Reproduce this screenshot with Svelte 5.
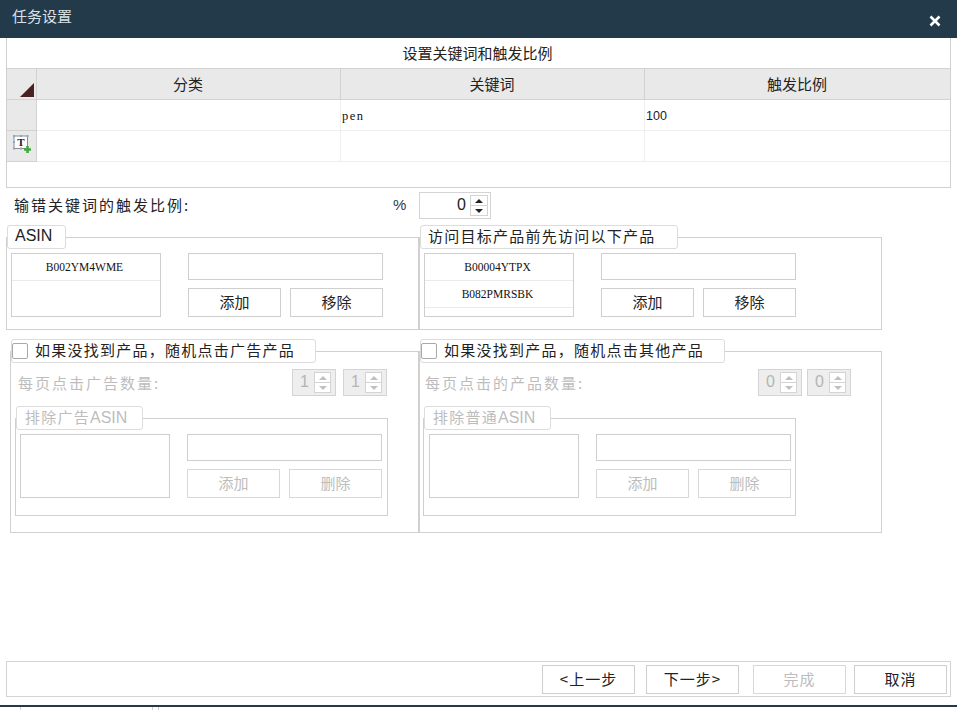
<script>
  let keywordRows = [
    { category: '', keyword: 'pen', ratio: '100' },
    { category: '', keyword: '', ratio: '' }
  ];
</script>

{#snippet spinner(value, disabled)}
  <div class="spinner" class:off={disabled}>
    <span class="spin-value">{value}</span>
    <span class="spin-arrows">
      <i class="up"></i>
      <i class="down"></i>
    </span>
  </div>
{/snippet}

{#snippet asinPanel(items, secondLabel, disabled)}
  <div class="panel" class:off={disabled}>
    <div class="list">
      {#each items as item}
        <div class="list-item">{item}</div>
      {/each}
    </div>
    <div class="editor">
      <div class="field"></div>
      <div class="editor-buttons">
        <button class="btn" {disabled}>添加</button>
        <button class="btn" {disabled}>{secondLabel}</button>
      </div>
    </div>
  </div>
{/snippet}

<div class="dialog">
  <header class="titlebar">
    <span class="title">任务设置</span>
    <svg class="close" width="12" height="12" viewBox="0 0 12 12">
      <path d="M1.5 1.5 10.5 10.5M10.5 1.5 1.5 10.5" stroke="#fff" stroke-width="2.6" />
    </svg>
  </header>

  <section class="table-box">
    <div class="table-title">设置关键词和触发比例</div>
    <div class="grid">
      <div class="corner">
        <svg width="14" height="14" viewBox="0 0 14 14"><polygon points="14,0 14,14 0,14" fill="#4a2020" /></svg>
      </div>
      <div class="head">分类</div>
      <div class="head">关键词</div>
      <div class="head">触发比例</div>

      {#each keywordRows as row, i}
        <div class="gutter">
          {#if i === 1}
            <svg width="20" height="20" viewBox="0 0 20 20">
              <rect x="2" y="2" width="13.5" height="12.5" fill="#fff" stroke="#8c8c8c" />
              <path d="M1 1h2v2H1zM8 1h2v2H8zM14.500 1h2v2h-2zM1 7h2v2H1zM1 13.500h2v2H1zM8 13.500h2v2H8z" fill="#8aa6d0" />
              <text x="8.800" y="12" text-anchor="middle" class="t-glyph">T</text>
              <path d="M15.500 12v7M12 15.500h7" stroke="#3fa83f" stroke-width="2.600" />
            </svg>
          {/if}
        </div>
        <div class="cell">{row.category}</div>
        <div class="cell mono">{row.keyword}</div>
        <div class="cell">{row.ratio}</div>
      {/each}
    </div>
  </section>

  <div class="typo-row">
    <span class="label typo-label">输错关键词的触发比例:</span>
    <span class="percent">%</span>
    <div class="spinner wide">
      <span class="spin-value">0</span>
      <span class="spin-arrows dark">
        <i class="up"></i>
        <i class="down"></i>
      </span>
    </div>
  </div>

  <div class="frames-top">
    <fieldset class="frame first">
      <div class="legend"><span class="latin">ASIN</span></div>
      {@render asinPanel(['B002YM4WME'], '移除', false)}
    </fieldset>
    <fieldset class="frame second">
      <div class="legend second-legend"><span class="label">访问目标产品前先访问以下产品</span></div>
      {@render asinPanel(['B00004YTPX', 'B082PMRSBK'], '移除', false)}
    </fieldset>
  </div>

  <div class="frames-bottom">
    <fieldset class="frame lower-left">
      <div class="legend check-legend">
        <input type="checkbox" />
        <span class="label">如果没找到产品，随机点击广告产品</span>
      </div>
      <div class="count-row">
        <span class="label muted count-label">每页点击广告数量:</span>
        <div class="spinners">
          {@render spinner(1, true)}
          {@render spinner(1, true)}
        </div>
      </div>
      <div class="inner">
        <div class="legend inner-legend"><span class="muted inner-title">排除广告<span class="latin">ASIN</span></span></div>
        {@render asinPanel([], '删除', true)}
      </div>
    </fieldset>

    <fieldset class="frame lower-right">
      <div class="legend check-legend">
        <input type="checkbox" />
        <span class="label">如果没找到产品，随机点击其他产品</span>
      </div>
      <div class="count-row">
        <span class="label muted count-label">每页点击的产品数量:</span>
        <div class="spinners">
          {@render spinner(0, true)}
          {@render spinner(0, true)}
        </div>
      </div>
      <div class="inner">
        <div class="legend inner-legend"><span class="muted inner-title">排除普通<span class="latin">ASIN</span></span></div>
        {@render asinPanel([], '删除', true)}
      </div>
    </fieldset>
  </div>

  <footer class="footer">
    <button class="btn">&lt;上一步</button>
    <button class="btn">下一步&gt;</button>
    <button class="btn" disabled>完成</button>
    <button class="btn">取消</button>
  </footer>

  <div class="strip">
    <i class="tick a"></i>
    <i class="tick b"></i>
    <i class="tick c"></i>
  </div>
</div>

<style>
  :global(body) {
    margin: 0;
    background: #fff;
  }

  .dialog {
    width: 957px;
    height: 710px;
    display: flex;
    flex-direction: column;
    overflow: hidden;
    font-family: "Noto Sans CJK SC", "Liberation Sans", sans-serif;
    font-size: 14px;
    color: #222;
    background: #fff;
  }

  .titlebar {
    height: 38px;
    flex: none;
    box-sizing: border-box;
    display: flex;
    justify-content: space-between;
    padding: 6px 16px 0 12px;
    background: #233a4b;
    color: #d9e0e5;
  }

  .title {
    font-size: 15px;
    line-height: 20px;
  }

  .close {
    margin-top: 9px;
  }

  .table-box {
    margin-left: 6px;
    width: 945px;
    height: 150px;
    flex: none;
    box-sizing: border-box;
    border: 1px solid #d0d0d0;
    border-top: none;
  }

  .table-title {
    height: 30px;
    line-height: 29px;
    text-align: center;
    font-size: 15px;
    padding-right: 2px;
  }

  .grid {
    display: grid;
    grid-template-columns: 30px 304px 304px 1fr;
    grid-template-rows: 32px;
    grid-auto-rows: 31px;
  }

  .corner,
  .head,
  .gutter {
    background: #e9e9e9;
    box-sizing: border-box;
    border-right: 1px solid #d2d2d2;
    border-bottom: 1px solid #d2d2d2;
    border-top: 1px solid #d2d2d2;
  }

  .head:nth-child(4) {
    border-right: none;
  }

  .head {
    text-align: center;
    line-height: 30px;
    font-size: 15px;
    padding-right: 1px;
  }

  .corner {
    display: flex;
    align-items: flex-end;
    justify-content: flex-end;
    padding: 0 2px 2px 0;
  }

  .gutter {
    border-top: none;
    display: flex;
    align-items: flex-start;
    justify-content: center;
    padding-top: 3px;
  }

  .t-glyph {
    font-family: "Liberation Serif", serif;
    font-weight: 700;
    font-size: 11px;
    fill: #222;
  }

  .cell {
    box-sizing: border-box;
    border-right: 1px solid #eeeeee;
    border-bottom: 1px solid #eeeeee;
    padding-left: 1px;
    line-height: 32px;
    font-family: "Liberation Sans", sans-serif;
    font-size: 12.5px;
  }

  .cell:nth-child(4n) {
    border-right: none;
  }

  .mono {
    font-family: "Liberation Serif", serif;
    font-size: 12.5px;
    letter-spacing: 1.5px;
    color: #111;
  }

  .label {
    font-size: 15px;
    letter-spacing: 1.25px;
    line-height: 20px;
    white-space: nowrap;
  }

  .latin {
    font-family: "Liberation Sans", sans-serif;
    font-size: 16px;
    letter-spacing: 0;
  }

  .typo-row {
    height: 49px;
    flex: none;
    box-sizing: border-box;
    display: flex;
    align-items: flex-start;
    padding: 4px 0 0 14px;
  }

  .typo-label {
    width: 379px;
    line-height: 26px;
    letter-spacing: 2px;
  }

  .percent {
    width: 26px;
    font-family: "Liberation Sans", sans-serif;
    font-size: 15px;
    line-height: 26px;
    color: #2b3a55;
  }

  .frames-top,
  .frames-bottom {
    display: flex;
    flex: none;
  }

  .frames-top {
    margin-left: 6px;
    height: 93px;
  }

  .frames-bottom {
    margin: 21px 0 0 10px;
    height: 182px;
  }

  .frame {
    position: relative;
    margin: 0;
    padding: 15px 0 0 4px;
    min-width: 0;
    box-sizing: border-box;
    border: 1px solid #d0d0d0;
  }

  .first {
    width: 413px;
  }

  .second {
    width: 463px;
  }

  .lower-left {
    width: 409px;
  }

  .lower-right {
    width: 463px;
  }

  .lower-left,
  .lower-right {
    padding: 17px 0 0 7px;
  }

  .lower-right {
    padding-left: 5px;
  }

  .legend {
    position: absolute;
    left: 0;
    top: -13px;
    height: 24px;
    box-sizing: border-box;
    padding: 0 7px 3px;
    display: flex;
    align-items: center;
    background: #fff;
    border: 1px solid #dcdcdc;
    border-radius: 3px;
  }

  .first .legend {
    width: 59px;
    height: 24px;
  }

  .second-legend {
    width: 258px;
  }

  .check-legend {
    left: 0;
    top: -13px;
    width: 305px;
    padding: 0 0 3px 0;
  }

  .lower-left .check-legend {
    width: 305px;
  }

  .check-legend input {
    appearance: none;
    margin: 3px 7px 0 0;
    width: 16px;
    height: 16px;
    box-sizing: border-box;
    border: 1px solid #a8a8a8;
    border-radius: 2px;
    background: #fff;
  }

  .inner-legend {
    left: 0;
    top: -13px;
    width: 127px;
    padding-left: 8px;
  }

  .inner-title {
    font-size: 15px;
    letter-spacing: 1.25px;
    white-space: nowrap;
  }

  .muted,
  .muted .latin {
    color: #bdbdbd;
  }

  .count-label {
    letter-spacing: 2px;
  }

  .count-row {
    display: flex;
    justify-content: space-between;
    align-items: center;
    height: 27px;
    width: 369px;
  }

  .lower-right .count-row {
    width: 426px;
  }

  .spinners {
    display: flex;
    gap: 7px;
  }

  .lower-right .spinners {
    gap: 5px;
  }

  .spinner {
    width: 44px;
    height: 27px;
    box-sizing: border-box;
    display: flex;
    align-items: center;
    justify-content: flex-end;
    gap: 5px;
    padding-right: 4px;
    border: 1px solid #d4d4d4;
    font-family: "Liberation Sans", sans-serif;
    font-size: 16px;
    background: #fff;
  }

  .spinner.off {
    background: #eeeeee;
    color: #b5b5b5;
  }

  .spinner.wide {
    width: 72px;
    color: #222;
    padding-right: 2px;
    gap: 4px;
  }

  .spin-value {
    padding-bottom: 2px;
  }

  .spin-arrows {
    width: 17px;
    height: 21px;
    display: flex;
    flex-direction: column;
    background: #fff;
    border: 1px solid #d4d4d4;
    box-sizing: border-box;
  }

  .wide .spin-arrows {
    width: 18px;
  }

  .spin-arrows i {
    flex: 1;
    position: relative;
  }

  .spin-arrows i.up {
    border-bottom: 1px solid #d4d4d4;
  }

  .spin-arrows i::after {
    content: "";
    position: absolute;
    left: 50%;
    top: 50%;
    margin: -2px 0 0 -4px;
    border-left: 4px solid transparent;
    border-right: 4px solid transparent;
  }

  .spin-arrows .up::after {
    border-bottom: 4px solid #c0c0c0;
  }

  .spin-arrows .down::after {
    border-top: 4px solid #c0c0c0;
  }

  .dark .up::after {
    border-bottom-color: #222;
  }

  .dark .down::after {
    border-top-color: #222;
  }

  .inner {
    position: relative;
    margin: 22px 0 0 -3px;
    width: 373px;
    height: 98px;
    box-sizing: border-box;
    padding: 15px 0 0 4px;
    border: 1px solid #d0d0d0;
  }

  .lower-right .inner {
    margin-left: -2px;
    padding-left: 5px;
  }

  .panel {
    display: flex;
    gap: 27px;
  }

  .inner .panel {
    gap: 17px;
  }

  .list {
    width: 150px;
    height: 64px;
    box-sizing: border-box;
    border: 1px solid #cfcfcf;
    overflow: hidden;
  }

  .list-item {
    height: 27px;
    box-sizing: border-box;
    padding-right: 3px;
    text-align: center;
    font-family: "Liberation Serif", serif;
    font-size: 11.500px;
    line-height: 26px;
    color: #111;
    border-bottom: 1px solid #eaeaea;
  }

  .editor {
    width: 195px;
    display: flex;
    flex-direction: column;
    gap: 8px;
  }

  .field {
    height: 27px;
    box-sizing: border-box;
    border: 1px solid #cfcfcf;
  }

  .editor-buttons {
    display: flex;
    justify-content: space-between;
  }

  .btn {
    width: 93px;
    height: 29px;
    padding: 0 0 2px;
    box-sizing: border-box;
    font: inherit;
    font-size: 15px;
    color: #222;
    background: #fff;
    border: 1px solid #cfcfcf;
  }

  .btn:disabled {
    color: #bdbdbd;
    border-color: #d8d8d8;
  }

  .footer {
    margin: auto 0 0 6px;
    width: 945px;
    height: 36px;
    flex: none;
    box-sizing: border-box;
    border: 1px solid #d4d4d4;
    display: flex;
    justify-content: flex-end;
    align-items: center;
    gap: 8px;
    padding-right: 3px;
  }

  .footer .btn {
    letter-spacing: 1px;
  }

  .footer .btn:nth-child(1) {
    margin-right: 3px;
  }

  .footer .btn:nth-child(2) {
    margin-right: 6px;
  }

  .strip {
    margin-top: 8px;
    height: 5px;
    flex: none;
    position: relative;
    box-sizing: border-box;
    border-top: 2px solid #233a4b;
  }

  .tick {
    position: absolute;
    top: 0;
    width: 1px;
    height: 3px;
    background: #d0d0d0;
  }

  .tick.a {
    left: 20px;
  }

  .tick.b {
    left: 152px;
  }

  .tick.c {
    left: 158px;
  }
</style>
